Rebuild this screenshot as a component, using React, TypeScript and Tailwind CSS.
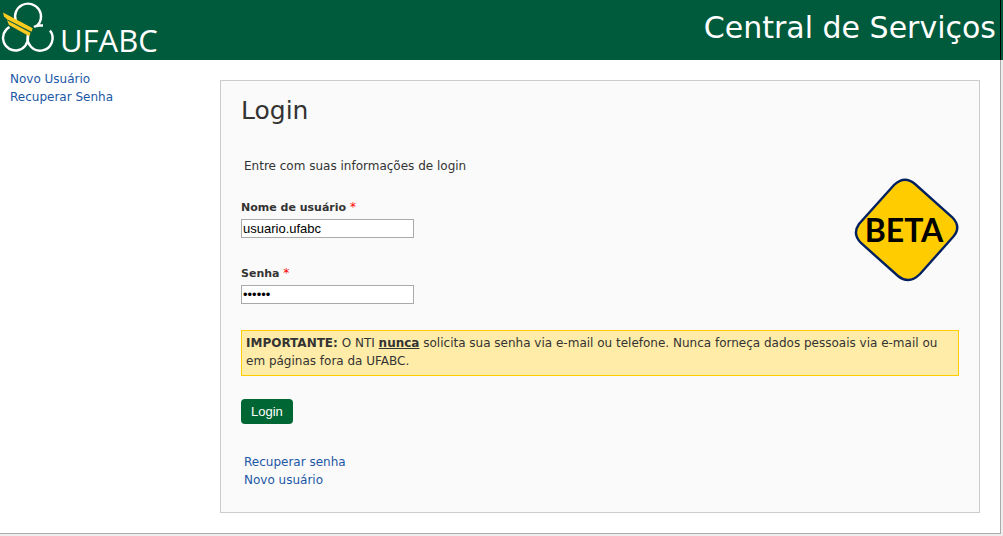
import { useState } from "react";

function Logo() {
  return (
    <svg width="160" height="60" viewBox="0 0 160 60" role="img" aria-label="UFABC">
      <g fill="none" stroke="#fff" strokeWidth="2.4">
        <path d="M15.800 21A13 13 0 1 1 36.500 26.500" />
        <path d="M34 27C36.500 25 39 25.500 43 25.500" />
        <path d="M9.500 27A12.500 12.500 0 1 0 28 37.500V34" />
        <path d="M28 35A12.500 12.500 0 1 0 50 30.500" />
      </g>
      <path d="M3 12.500L32.800 28.300L31.500 31.800L7 19.300L4 16.500Z" fill="#fdcb1f" />
      <path d="M7 20.300L30.500 32.800L29.300 36.300L9 25Z" fill="#fdcb1f" />
      <text x="60" y="52" fill="#fff" fontSize="31" fontFamily="'Open Sans', sans-serif">UFABC</text>
    </svg>
  );
}

function BetaSign() {
  return (
    <svg width="106" height="106" viewBox="0 0 106 106" role="img" aria-label="BETA">
      <path
        d="M41 8Q51.500 -2 62 7L99 40Q109 50 100 60L67 97Q56 108 45 99L8 66Q-1 57 6 47Z"
        fill="#fc0"
        stroke="#002060"
        strokeWidth="2.4"
      />
      <text x="51" y="65" textAnchor="middle" fontSize="32" fontWeight="700" fontFamily="Lato, sans-serif">BETA</text>
    </svg>
  );
}

type FieldProps = { id: string; label: string; type: string; initial: string };

function Field({ id, label, type, initial }: FieldProps) {
  const [value, setValue] = useState(initial);
  return (
    <div>
      <label htmlFor={id} className="block text-[11px] leading-[18px] font-bold">
        {label} <span className="text-xs leading-none font-normal text-[#f00]">*</span>
      </label>
      <input
        id={id}
        type={type}
        value={value}
        onChange={(e) => setValue(e.target.value)}
        className="mt-0.5 block h-[19px] w-[173px] border border-[#aaa] bg-white px-px font-['Liberation_Sans',sans-serif] text-[13px] text-black"
      />
    </div>
  );
}

export default function App() {
  return (
    <div className="flex min-h-screen flex-col bg-[#eee] font-['DejaVu_Sans',sans-serif] text-xs leading-[18px] text-[#333]">
      <header className="flex h-[60px] bg-[#005a3c]">
        <div className="flex flex-1 items-center justify-between pr-1">
          <Logo />
          <h1 className="pb-1 text-[30px] leading-9 text-white">Central de Serviços</h1>
        </div>
        <div className="w-[3px] border-l border-black" />
      </header>
      <div className="mr-0.5 flex border-r border-b border-[#aaa] bg-white pr-5 pb-5">
        <nav className="flex w-[220px] shrink-0 flex-col items-start pt-[10px] pl-[10px] text-[#1b57a5]">
          <a href="#novo">Novo Usuário</a>
          <a href="#recuperar">Recuperar Senha</a>
        </nav>
        <main className="mt-5 flex-1 border border-[#ccc] bg-[#fafafa] px-5 pt-3 pb-[23px]">
          <h2 className="text-[25px] leading-9">Login</h2>
          <div className="mt-7 flex justify-between">
            <div>
              <p className="pl-[3px]">Entre com suas informações de login</p>
              <div className="mt-6 flex flex-col gap-[27px]">
                <Field id="usuario" label="Nome de usuário" type="text" initial="usuario.ufabc" />
                <Field id="senha" label="Senha" type="password" initial="123456" />
              </div>
            </div>
            <div className="pt-5">
              <BetaSign />
            </div>
          </div>
          <p className="mt-[26px] border border-[#fc0] bg-[#ffeca8] px-1 pt-[3px] pb-[5px]">
            <strong>IMPORTANTE:</strong> O NTI <strong className="underline">nunca</strong> solicita sua senha via e-mail ou telefone. Nunca forneça dados pessoais via e-mail ou em páginas fora da UFABC.
          </p>
          <button type="button" className="mt-[23px] block h-[25px] rounded bg-[#063] px-[10px] font-['Liberation_Sans',sans-serif] text-[13px] text-white">
            Login
          </button>
          <div className="mt-7 flex flex-col items-start pt-px pl-[3px] text-[#1b57a5]">
            <a href="#recuperar">Recuperar senha</a>
            <a href="#novo">Novo usuário</a>
          </div>
        </main>
      </div>
    </div>
  );
}
